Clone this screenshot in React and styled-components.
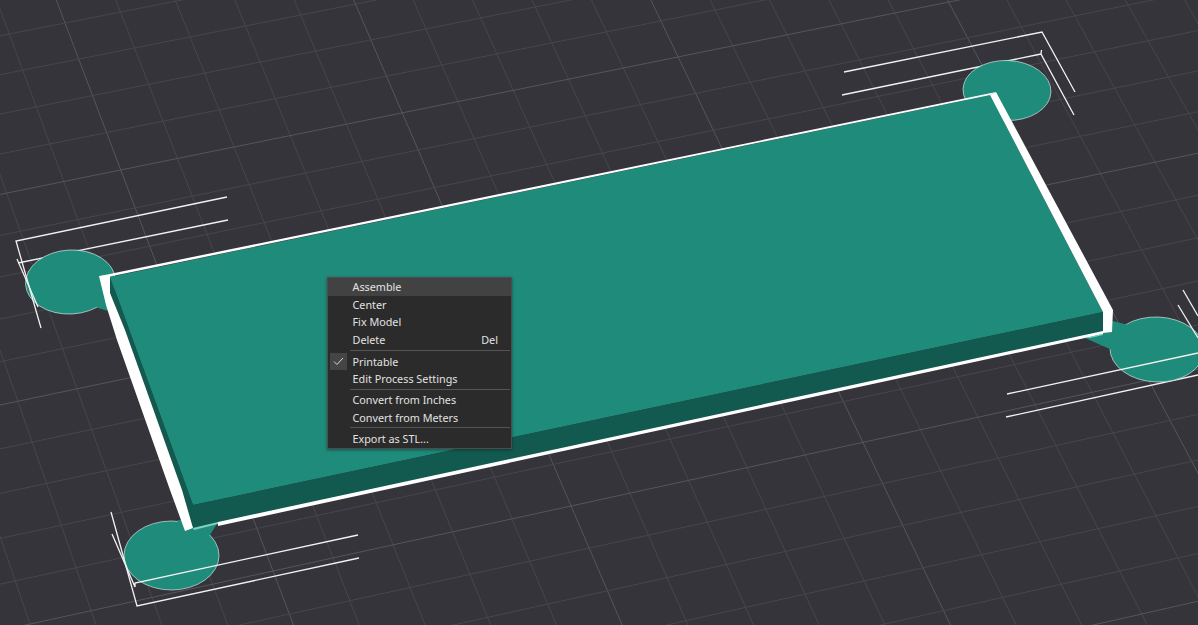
import React from "react";
import styled, { createGlobalStyle } from "styled-components";

const GlobalStyle = createGlobalStyle`
  html, body {
    margin: 0;
    padding: 0;
    background: #35343b;
    overflow: hidden;
  }
`;

const Viewport = styled.div`
  position: relative;
  width: 1198px;
  height: 625px;
  background: #35343b;
  overflow: hidden;
`;

const Scene = styled.svg`
  display: block;
  width: 100%;
  height: 100%;
`;

const Menu = styled.div`
  position: absolute;
  left: 327px;
  top: 277px;
  box-sizing: border-box;
  width: 185px;
  height: 172px;
  display: flex;
  flex-direction: column;
  background: #2b2b2b;
  border: 1px solid #4d4d4d;
  box-shadow: 0 1px 3px rgba(0, 0, 0, 0.4);
  font-family: "Noto Sans", "Open Sans", sans-serif;
  font-size: 10.8px;
  color: #e2e2e2;
`;

const Row = styled.div`
  display: flex;
  align-items: center;
  height: 17.5px;
  padding: 0 13px 0 24.5px;
  position: relative;
  background: ${(props) => (props.$active ? "#424242" : "transparent")};
`;

const Label = styled.span`
  flex: 1;
  white-space: nowrap;
`;

const Shortcut = styled.span`
  white-space: nowrap;
`;

const CheckBox = styled.span`
  position: absolute;
  left: 2px;
  top: 0;
  width: 17px;
  height: 17px;
  display: flex;
  align-items: center;
  justify-content: center;
  background: #454545;
`;

const Separator = styled.div`
  height: 1px;
  margin: ${(props) => (props.$loose ? "1.5px" : "1px")} 1px ${(props) => (props.$loose ? "2px" : "1.5px")} 22px;
  background: #555;
`;

const menuItems = [
  { label: "Assemble", active: true },
  { label: "Center" },
  { label: "Fix Model" },
  { label: "Delete", shortcut: "Del" },
  { separator: true, loose: true },
  { label: "Printable", checked: true },
  { label: "Edit Process Settings" },
  { separator: true },
  { label: "Convert from Inches" },
  { label: "Convert from Meters" },
  { separator: true },
  { label: "Export as STL..." },
];

// bed plane to screen, fitted on the grid crossings
const project = (u, v) => {
  const w = 1 + 0.001964 * u - 0.005998 * v;
  return [(55.73 * u + 13.22 * v + 65) / w, (-10.92 * u + 35.72 * v + 23) / w];
};

const gridLine = (key, a, b, major) => (
  <line
    key={key}
    x1={a[0]}
    y1={a[1]}
    x2={b[0]}
    y2={b[1]}
    stroke={major ? "#56555a" : "#47464c"}
    strokeWidth="1"
  />
);

const Grid = () => {
  const lines = [];
  for (let u = -10; u <= 30; u++) {
    lines.push(gridLine(`u${u}`, project(u, -12), project(u, 32), u % 5 === 0));
  }
  for (let v = -12; v <= 32; v++) {
    lines.push(gridLine(`v${v}`, project(-10, v), project(30, v), (v + 1) % 5 === 0));
  }
  return <g>{lines}</g>;
};

const TEAL = "#1f8b7b";
const DARK = "#125a50";
const RIM = "#cfe6e0";

const Ear = ({ cx, cy, rx, ry, tilt }) => (
  <ellipse
    cx={cx}
    cy={cy}
    rx={rx}
    ry={ry}
    fill={TEAL}
    stroke={RIM}
    strokeWidth="0.7"
    transform={`rotate(${tilt} ${cx} ${cy})`}
  />
);

const Wire = ({ points }) => (
  <polyline points={points} fill="none" stroke="#f2f2f2" strokeWidth="1.3" />
);

const Plate = () => (
  <g>
    {/* wires that run under the brim ears */}
    <Wire points="228,220 18,263" />
    <Wire points="842,95 1041,54" />
    <Wire points="1006,417 1198,375" />

    <Ear cx={70.5} cy={282} rx={45} ry={32} tilt={-3} />
    <Ear cx={1007} cy={90.5} rx={44} ry={30} tilt={2} />
    <Ear cx={171.5} cy={555.5} rx={47.5} ry={34.5} tilt={0} />
    <Ear cx={1157} cy={349.5} rx={47} ry={32.5} tilt={2} />
    <polygon points="1113,321 1128,325 1112,350 1085,338" fill={TEAL} />
    <polygon points="178,520 218,522 210,535 172,542" fill={TEAL} />
    <polygon points="88,296 110,290 112,312 98,308" fill={TEAL} />

    {/* part body */}
    <polygon points="110,277 990,95 1103,312 193,505" fill={TEAL} />
    <polygon points="193,505 1103,312 1103,333 193,528" fill={DARK} />
    <polygon points="110,277 193,505 193,528 125,330 110,293" fill={DARK} />

    {/* bright outline */}
    <polygon points="100,276 996,92 990,95 110,276.5" fill="#fff" />
    <polygon points="99,276 106,305 117,340 170,490 185,531 193,528 182,490 125,330 110,293 110,275" fill="#fff" />
    <polygon points="990,95 996,92 1113,310 1112,332 1103,333 1103,312" fill="#fff" />
    <polygon points="218,522 1103,331 1103,334 1085,338 218,526" fill="#fff" />
    <polygon points="193,528 218,522 218,524 194,530" fill="#7fd0c2" />
    <polygon points="1085,338 1103,334 1103,335 1090,338" fill="#7fd0c2" />

    {/* bracket wires drawn over the ears */}
    <Wire points="227,197 16,241 41,328" />
    <Wire points="17,259 38,307" />
    <Wire points="844,72 1042,32 1075,92" />
    <Wire points="1041.5,50 1041,54 1074,115" />
    <Wire points="111,512 137,606 359,558" />
    <Wire points="112,534 135,587 135,583 358,535" />
    <Wire points="1007,394 1198,353" />
    <Wire points="1183,290 1198,316" />
    <Wire points="1178,305 1198,338" />
  </g>
);

const App = () => (
  <Viewport>
    <GlobalStyle />
    <Scene viewBox="0 0 1198 625">
      <Grid />
      <Plate />
    </Scene>
    <Menu>
      {menuItems.map((item, i) =>
        item.separator ? (
          <Separator key={i} $loose={item.loose} />
        ) : (
          <Row key={i} $active={item.active}>
            {item.checked && (
              <CheckBox>
                <svg width="11" height="9" viewBox="0 0 11 9">
                  <path d="M1 4.5 L4 7.5 L10 1" fill="none" stroke="#d8d8d8" strokeWidth="1" />
                </svg>
              </CheckBox>
            )}
            <Label>{item.label}</Label>
            {item.shortcut && <Shortcut>{item.shortcut}</Shortcut>}
          </Row>
        )
      )}
    </Menu>
  </Viewport>
);

export default App;
